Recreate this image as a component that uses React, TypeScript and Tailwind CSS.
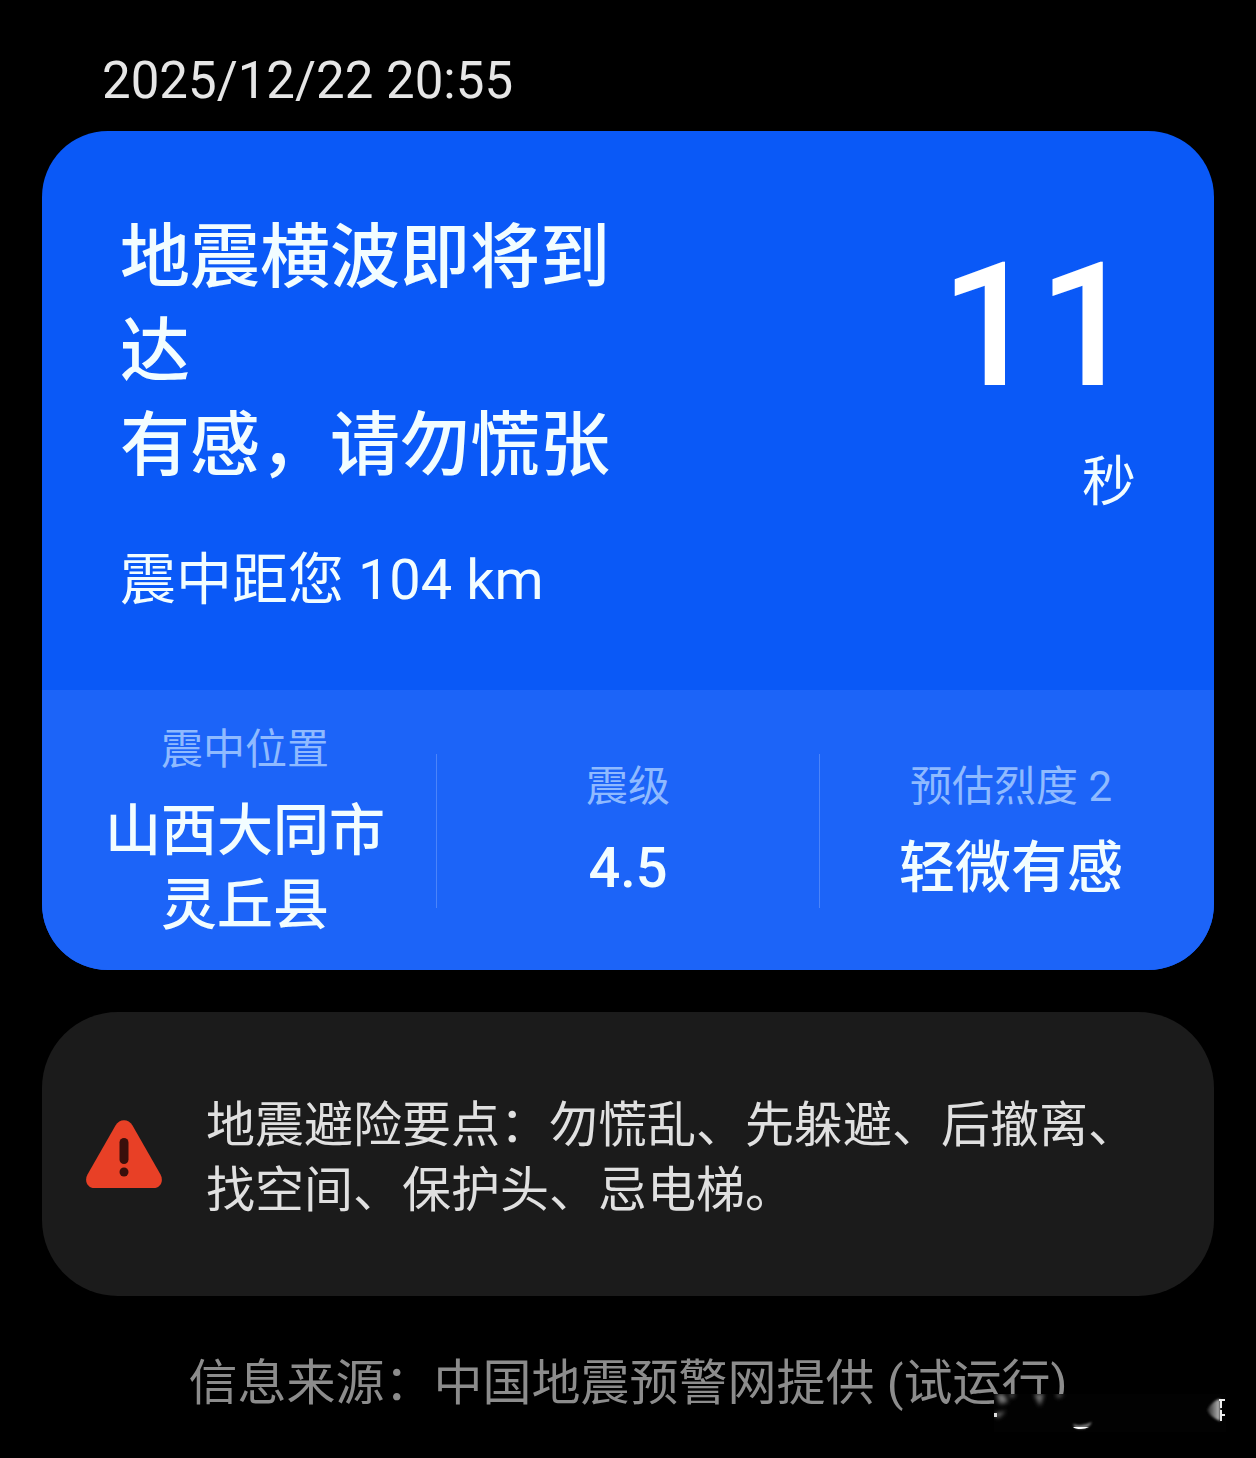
import React from 'react';

interface StatProps {
  label: string;
  lines: string[];
}

const Stat: React.FC<StatProps> = ({ label, lines }) => (
  <div className="flex flex-1 flex-col items-center justify-center gap-3.5 text-center">
    <dt className="text-[42px] leading-[60px] text-[#8fbaff]">{label}</dt>
    <dd className="text-[56px] font-medium leading-[74px] text-[#f2fdff]">
      {lines.map((line) => (
        <span key={line} className="block">{line}</span>
      ))}
    </dd>
  </div>
);

const WarningIcon: React.FC = () => (
  <svg viewBox="0 0 76 68" className="h-[68px] w-[76px] shrink-0" aria-hidden="true">
    <path
      d="M29.500 5.500C33.500 -1.500 42.500 -1.500 46.500 5.500L74.500 54.500C78 61 74.500 68 67.500 68H8.500C1.500 68 -2 61 1.500 54.500Z"
      fill="#e84026"
    />
    <rect x="33.500" y="18" width="9" height="26" rx="4.500" fill="#3a0f0b" />
    <circle cx="38" cy="52" r="4.500" fill="#3a0f0b" />
  </svg>
);

// Faded mark in the bottom corner
const CornerMark: React.FC = () => (
  <svg viewBox="0 0 232 38" className="absolute -right-[12px] top-[46px] h-[38px] w-[232px]" aria-hidden="true">
    <defs>
      <filter id="soft" x="-50%" y="-50%" width="200%" height="200%">
        <feGaussianBlur stdDeviation="2" />
      </filter>
      <filter id="softer" x="-20%" y="-20%" width="140%" height="140%">
        <feGaussianBlur stdDeviation="1" />
      </filter>
      <linearGradient id="fade" x1="0" x2="1">
        <stop offset="0" stopColor="#222" />
        <stop offset="1" stopColor="#bbb" />
      </linearGradient>
    </defs>
    <rect x="0" y="0" width="232" height="38" fill="#020202" />
    <g filter="url(#soft)" fill="#777">
      <path d="M2 0H10L14 8L6 10Z" />
      <path d="M40 0H50L46 12Z" />
      <path d="M14 0H22L18 4Z" />
      <path d="M62 0H70L64 4Z" />
      <path d="M0 20L12 17L4 24Z" />
    </g>
    <rect x="0" y="19" width="3" height="4" fill="#ddd" />
    <path d="M79 30Q87 33 98 28Q95 35 87 35Q80 35 79 30Z" fill="#777" filter="url(#softer)" />
    <path d="M79 33H95Q91 35 87 35Q81 35 79 33Z" fill="#fff" />
    <path d="M213 16Q219 6 226 5V27Q216 23 213 16Z" fill="url(#fade)" filter="url(#softer)" />
    <path d="M225 6H231M227 6V14M227 16V27M227 21H231" stroke="#eee" strokeWidth="2" fill="none" />
  </svg>
);

const App: React.FC = () => (
  <main className="min-h-screen bg-black px-[42px] pt-12 pb-10 font-['Roboto','Noto_Sans_CJK_SC',sans-serif]">
    <time className="block pl-[60px] text-[51px] leading-[66px] text-[#e6e6e6]">2025/12/22 20:55</time>

    {/* Alert card */}
    <section className="mt-[17px] overflow-hidden rounded-[66px] bg-[#0a59f7] text-[#f2fdff]">
      <div className="flex justify-between px-[78px] pt-20 pb-[68px]">
        <div>
          <h1 className="w-[500px] text-[70px] font-medium leading-[94px]">
            地震横波即将到达<br />有感，请勿慌张
          </h1>
          <p className="mt-[45px] text-[56px] leading-[84px]">震中距您 104 km</p>
        </div>
        <div className="flex flex-col items-end">
          <span className="text-[172px] font-medium leading-[230px] text-white">11</span>
          <span className="mt-0.5 text-[54px] leading-[80px]">秒</span>
        </div>
      </div>
      <dl className="flex items-center bg-[#1c64f8] px-3 pt-[30px] pb-[28px]">
        <Stat label="震中位置" lines={['山西大同市', '灵丘县']} />
        <div className="h-[154px] w-px bg-[#4b84fa]" />
        <Stat label="震级" lines={['4.5']} />
        <div className="h-[154px] w-px bg-[#4b84fa]" />
        <Stat label="预估烈度 2" lines={['轻微有感']} />
      </dl>
    </section>

    {/* Safety tips */}
    <section className="mt-[42px] flex items-center gap-11 rounded-[76px] bg-[#1b1b1b] px-11 py-[73px] text-[#e0e0e0]">
      <WarningIcon />
      <p className="pt-2 text-[49px] leading-[65px]">地震避险要点：勿慌乱、先躲避、后撤离、找空间、保护头、忌电梯。</p>
    </section>

    <footer className="relative mt-[52px] text-center text-[49px] leading-[72px] text-[#8c8c8c]">
      信息来源：中国地震预警网提供 (试运行)
      <CornerMark />
    </footer>
  </main>
);

export default App;
